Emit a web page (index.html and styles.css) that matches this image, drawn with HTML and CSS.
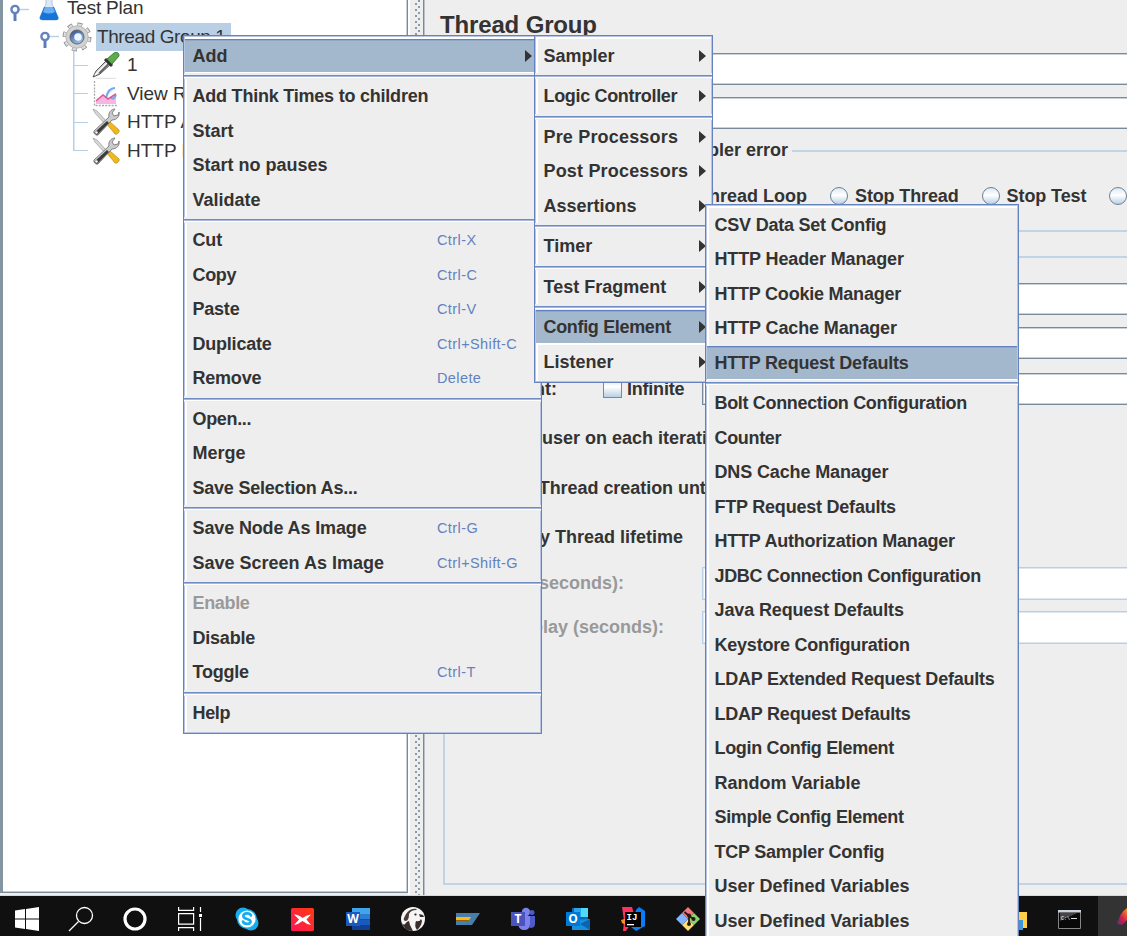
FILE: index.html
```html
<!DOCTYPE html>
<html lang="en">
<head>
<meta charset="utf-8">
<title>Thread Group</title>
<link rel="stylesheet" href="styles.css">
</head>
<body>
<svg class="defs" width="0" height="0" aria-hidden="true">
  <defs>
    <linearGradient id="orb" x1="0" y1="0" x2="0.6" y2="1"><stop offset="0" stop-color="#24457f"/><stop offset="1" stop-color="#9dc4ee"/></linearGradient>
    <linearGradient id="xred" x1="0" y1="1" x2="1" y2="0"><stop offset="0" stop-color="#ff1654"/><stop offset="1" stop-color="#ff3a10"/></linearGradient>
    <linearGradient id="feather" x1="0" y1="1" x2="1" y2="0"><stop offset="0" stop-color="#68217a"/><stop offset=".3" stop-color="#d0204b"/><stop offset=".7" stop-color="#f59a24"/></linearGradient>
    <symbol id="tools" viewBox="0 0 28 28">
      <path d="M1 1l4 2 10 11-2 2L3 5z" fill="#d8d8d8" stroke="#999" stroke-width=".7"/>
      <path d="M14 15l3-2 10 9c1 2-2 5-4 4z" fill="#f0b81c" stroke="#b98a0c" stroke-width=".7"/>
      <path d="M2 23l15-14c-1-4 2-8 6-8l-3 4 2 3 4-1 1-3c1 4-2 8-7 8L6 27c-2 1-5-2-4-4z" fill="#c9cbcc" stroke="#777" stroke-width=".9"/>
      <path d="M2 25l13-12 2 2L5 27z" fill="#3c3c3c"/><circle cx="4.500" cy="24.500" r="1.300" fill="#fff"/>
    </symbol>
    <symbol id="key" viewBox="0 0 20 18">
      <path d="M9 5.500h11" stroke="#b8cfe5" stroke-width="1.400"/><path d="M6 8v9" stroke="#5c7cb8" stroke-width="3"/><circle cx="6" cy="5.500" r="3.600" fill="#fff" stroke="#6382bf" stroke-width="2.400"/>
    </symbol>
  </defs>
</svg>

<div class="window">
  <div class="workspace">
    <aside class="tree">
      <div class="node n0"><svg class="key" width="20" height="18"><use href="#key"/></svg>
        <svg class="ico flask" width="24" height="26" viewBox="0 0 24 26"><path d="M9 0h6v9l6 13q1 3-3 3H6q-4 0-3-3L9 9z" fill="#dce9f8" stroke="#b6c5d6"/><path d="M7 12h10l4.500 11q0 2-3 2H6q-4 0-3-3z" fill="#1673d8"/><path d="M8 12h8l2 5q-6 3-12 0z" fill="#69b0f4"/></svg>
        <span>Test Plan</span></div>
      <div class="node n1"><svg class="key" width="20" height="18"><use href="#key"/></svg>
        <svg class="ico" width="30" height="30" viewBox="0 0 30 30"><circle cx="15" cy="15" r="12" fill="none" stroke="#8e8e8e" stroke-width="5" stroke-dasharray="4.700 4.725"/><circle cx="15" cy="15" r="11.800" fill="none" stroke="#dedede" stroke-width="3.600" stroke-dasharray="3.500 5.768" stroke-dashoffset="-.6"/><circle cx="15" cy="15" r="8.800" fill="#fff" stroke="#d2d2d2" stroke-width="5"/><circle cx="15" cy="15" r="11.200" fill="none" stroke="#aaa" stroke-width=".7"/><circle cx="15" cy="15" r="7" fill="url(#orb)" stroke="#60656d"/><circle cx="16" cy="15" r="3.800" fill="#edf6ff"/></svg>
        <span class="selected">Thread Group 1</span></div>
      <div class="children">
        <div class="node leaf"><svg class="ico" width="28" height="28" viewBox="0 0 28 28"><path d="M1 26l3-6L15 9l4 4L8 23z" fill="#c9cbcc" stroke="#555"/><path d="M7 22L17 12" stroke="#666" stroke-width="2.500"/><path d="M3 24L15 12" stroke="#fff" stroke-width="1.500"/><path d="M13 8l7 7" stroke="#333" stroke-width="3"/><path d="M15 8l7-6q5-2 5 3l-7 8z" fill="#5faa4b" stroke="#3c8035"/><path d="M4 27.300h20" stroke="#ddd"/></svg><span>1</span></div>
        <div class="node leaf"><svg class="ico" width="28" height="28" viewBox="0 0 28 28"><path d="M2.500 1v24.500H26" fill="none" stroke="#aaa" stroke-dasharray="2 1.200" stroke-width="1.300"/><path d="M4 24l0-4 7-6 5 4 8-5v11z" fill="#f7b5e2"/><path d="M14 18q2-10 9-10M19 17q2 4 5-2" stroke="#75a6ee" fill="#dceaff" stroke-width="2"/><path d="M4 21l7-6 5 4 8-5" fill="none" stroke="#df5b91" stroke-width="1.500"/></svg><span>View Results Tree</span></div>
        <div class="node leaf"><svg class="ico" width="28" height="28"><use href="#tools"/></svg><span>HTTP Authorization</span></div>
        <div class="node leaf"><svg class="ico" width="28" height="28"><use href="#tools"/></svg><span>HTTP Request</span></div>
      </div>
    </aside>
    <div class="splitter"></div>
    <main class="panel">
      <h1>Thread Group</h1>
      <div class="field f-name"></div>
      <div class="field f-comment"></div>
      <div class="legend"><span>Action to be taken after a Sampler error</span><i></i></div>
      <div class="radios"><span class="r0">Start Next Thread Loop</span><i class="radio"></i><span class="r1 t1">Stop Thread</span><i class="radio"></i><span class="r2">Stop Test</span><i class="radio"></i></div>
      <section class="props">
        <div class="field p1"></div>
        <div class="field p2"></div>
        <div class="loop"><b>Loop Count:</b><i class="check"></i><b class="inf t2">Infinite</b><div class="field"></div></div>
        <div class="opt o1">Same user on each iteration</div>
        <div class="opt o2">Delay Thread creation until needed</div>
        <div class="opt o3">Specify Thread lifetime</div>
        <div class="sched"><b class="s1">Duration (seconds):</b><div class="field pale"></div></div>
        <div class="sched second"><b class="s2">Startup delay (seconds):</b><div class="field pale"></div></div>
      </section>
    </main>
  </div>

  <footer class="taskbar">
    <svg width="24" height="24" viewBox="0 0 24 24" fill="#fff"><path d="M0 3.500L10 2v9.500H0zM11 2l13-2v11.500H11zM0 12.500h10V22L0 20.500zM11 12.500h13V24l-13-2z"/></svg>
    <svg width="26" height="26" viewBox="0 0 26 26" fill="none" stroke="#fff" stroke-width="1.300"><circle cx="16.500" cy="9.500" r="8"/><path d="M10.500 15.500L1 25"/></svg>
    <svg width="24" height="24" viewBox="0 0 24 24"><circle cx="12" cy="12" r="10" fill="none" stroke="#fff" stroke-width="3.200"/></svg>
    <svg width="24" height="24" viewBox="0 0 24 24" fill="none" stroke="#fff" stroke-width="1.200"><path d="M.6 0v3.400h15V0M.6 24v-3.400h15V24M.6 6.600h15v10.500H.6zM22.500 0v5M22.500 11v13"/><path d="M21 7h3v3h-3z" fill="#fff" stroke="none"/></svg>
    <svg width="24" height="24" viewBox="0 0 24 24"><circle cx="8" cy="8" r="7.500" fill="#14aef0"/><circle cx="16" cy="16" r="7.500" fill="#14aef0"/><circle cx="12" cy="12" r="10" fill="#14aef0"/><circle cx="12" cy="12" r="8.600" fill="#fff"/><path d="M16 8.500C15 5.500 8.500 5.700 8.300 9c-.2 3.600 7.300 2.200 7.300 5.500 0 3-6.600 3.300-7.600 0" fill="none" stroke="#14aef0" stroke-width="2.600" stroke-linecap="round"/></svg>
    <svg width="23" height="23" viewBox="0 0 23 23"><rect width="23" height="23" rx="1.500" fill="url(#xred)"/><path d="M3 6.500q5 0 8.500 3.500Q15 7 20 6.500l-4.500 5L20 17q-5-1-8.500-4Q8 16 3 17l5-5.500z" fill="#fff"/></svg>
    <svg width="24" height="24" viewBox="0 0 24 24"><path fill="#41a5ee" d="M6 1h18v6H6z"/><path fill="#2b7cd3" d="M6 7h18v5.500H6z"/><path fill="#185abd" d="M6 12.500h18V18H6z"/><path fill="#103f91" d="M6 18h18v5H6z"/><path fill="#185abd" d="M0 5h14v14H0z"/><text x="7" y="16" text-anchor="middle" class="glyph">W</text></svg>
    <svg width="24" height="24" viewBox="0 0 24 24"><circle cx="12" cy="12" r="12" fill="#f7f5f3"/><path d="M5 7q4-6 11-5l-1 1q-5 0-7 4 0 6-3 7-3 0-2-3z" fill="#4a3d38"/><path d="M0 14q2 5 4 3 2-3 4-3l1 4 3 6q-9 0-12-10zM15 14q4 1 5-2l1 2q-1 6-5 9-3-4-1-9zM18 7l4 1 1 2-4 0z" fill="#382e2a"/><circle cx="14.500" cy="7.500" r="1.100" fill="#222"/></svg>
    <svg width="24" height="24" viewBox="0 0 24 24"><path d="M0 6h24l-8 12h-5l3-8H0z" fill="#477eac"/><path d="M0 10h15l-2 3.500H0z" fill="#fdb813"/><path d="M0 14h13l-2 4H0z" fill="#477eac"/></svg>
    <svg width="24" height="24" viewBox="0 0 24 24"><circle cx="15" cy="5" r="4.200" fill="#7b83eb"/><circle cx="21" cy="5.500" r="2.500" fill="#5059c9"/><path d="M17 9h7v8q0 4-5 4z" fill="#5059c9"/><path d="M7 9h12v8q0 6-6 6-5 0-6-6z" fill="#7b83eb"/><path fill="#4b53bc" d="M0 5h14v14H0z"/><text x="7" y="16" text-anchor="middle" class="glyph">T</text></svg>
    <svg width="24" height="24" viewBox="0 0 24 24"><path fill="#0a65b6" d="M6 1h16v14H6z"/><path fill="#28a8ea" d="M8 1h7v9H8z"/><path fill="#50d9ff" d="M15 1h7v9h-7z"/><path fill="#1490df" d="M6 13l18-1v11H6z"/><path fill="#0b64ad" d="M24 12v11L14 17z"/><path fill="#0078d4" d="M0 5h14v14H0z"/><text x="7" y="16" text-anchor="middle" class="glyph">O</text></svg>
    <svg width="24" height="24" viewBox="0 0 24 24"><path fill="#ff315f" d="M1 0l10 0 3 10-9 14H2l1-10z"/><path fill="#ff8a20" d="M0 13l7-2-2 7-4-2z"/><path fill="#087cfa" d="M15 3l3-3 6 4v15l-9 5-5-4z"/><path d="M4 5h16v15H4z"/><text x="5.500" y="13" class="glyph ij">IJ</text><path fill="#fff" d="M6 17h7v1.300H6z"/></svg>
    <svg width="24" height="24" viewBox="0 0 24 24"><path d="M12 0l6 6-6 6-6-6z" fill="#f27779"/><path d="M18 6l6 6-6 6-6-6z" fill="#8bd36b"/><path d="M12 12l6 6-6 6-6-6z" fill="#ffe06f"/><path d="M6 6l6 6-6 6-6-6z" fill="#82b4ff"/><path d="M8.500 5l4.500 4v8M12.500 8.500l5 3.500" stroke="#2b1717" stroke-width="1.800" fill="none"/><g fill="#2b1717"><circle cx="13" cy="8.500" r="2"/><circle cx="17.500" cy="12" r="2"/><circle cx="13" cy="17" r="2"/></g></svg>
    <svg class="folder" width="24" height="18" viewBox="0 0 24 18"><path d="M0 0h24v16H0z" fill="#ffcf48"/><path d="M5 8h15v10H5z" fill="#3a96dd"/></svg>
    <svg class="cmd" width="23" height="19" viewBox="0 0 23 19"><path fill="#080808" stroke="#858585" d="M.5.500h22v18H.5z"/><path d="M0 0h23v2.500H0z" fill="#ccd2dc"/><path d="M2 3h17L2 11z" fill="#464646"/><text x="3" y="9.500" class="prompt">C:\</text><path d="M13 8.500h6" stroke="#ddd"/></svg>
    <div class="active"><svg width="24" height="26" viewBox="0 0 24 26"><path d="M2 19Q3 5 17 0q3 3-1 10L6 20z" fill="url(#feather)"/><path d="M1 15l5 4-4 0z" fill="#8b267c"/></svg></div>
  </footer>
</div>

<nav class="menu main-menu">
  <div class="item on">Add<i class="arrow"></i></div><hr>
  <div class="item t2">Add Think Times to children</div>
  <div class="item">Start</div>
  <div class="item">Start no pauses</div>
  <div class="item">Validate</div><hr>
  <div class="item t1">Cut<kbd>Ctrl-X</kbd></div>
  <div class="item t3">Copy<kbd>Ctrl-C</kbd></div>
  <div class="item t2">Paste<kbd>Ctrl-V</kbd></div>
  <div class="item t2">Duplicate<kbd>Ctrl+Shift-C</kbd></div>
  <div class="item t2">Remove<kbd>Delete</kbd></div><hr>
  <div class="item t3">Open...</div>
  <div class="item">Merge</div>
  <div class="item t2">Save Selection As...</div><hr>
  <div class="item t1">Save Node As Image<kbd>Ctrl-G</kbd></div>
  <div class="item">Save Screen As Image<kbd>Ctrl+Shift-G</kbd></div><hr>
  <div class="item off t3">Enable</div>
  <div class="item t2">Disable</div>
  <div class="item t2">Toggle<kbd>Ctrl-T</kbd></div><hr>
  <div class="item t3">Help</div>
</nav>

<nav class="menu add-menu">
  <div class="item">Sampler<i class="arrow"></i></div><hr>
  <div class="item t3">Logic Controller<i class="arrow"></i></div><hr>
  <div class="item wide">Pre Processors<i class="arrow"></i></div>
  <div class="item wide">Post Processors<i class="arrow"></i></div>
  <div class="item">Assertions<i class="arrow"></i></div><hr>
  <div class="item">Timer<i class="arrow"></i></div><hr>
  <div class="item">Test Fragment<i class="arrow"></i></div><hr>
  <div class="item on t3">Config Element<i class="arrow"></i></div>
  <div class="item">Listener<i class="arrow"></i></div>
</nav>

<nav class="menu config-menu">
  <div class="item t2">CSV Data Set Config</div>
  <div class="item t1">HTTP Header Manager</div>
  <div class="item t2">HTTP Cookie Manager</div>
  <div class="item t1">HTTP Cache Manager</div>
  <div class="item on t2">HTTP Request Defaults</div><hr>
  <div class="item t3">Bolt Connection Configuration</div>
  <div class="item t3">Counter</div>
  <div class="item t1">DNS Cache Manager</div>
  <div class="item t2">FTP Request Defaults</div>
  <div class="item t2">HTTP Authorization Manager</div>
  <div class="item t3">JDBC Connection Configuration</div>
  <div class="item t1">Java Request Defaults</div>
  <div class="item t2">Keystore Configuration</div>
  <div class="item t2">LDAP Extended Request Defaults</div>
  <div class="item t2">LDAP Request Defaults</div>
  <div class="item t3">Login Config Element</div>
  <div class="item">Random Variable</div>
  <div class="item t3">Simple Config Element</div>
  <div class="item t2">TCP Sampler Config</div>
  <div class="item">User Defined Variables</div>
  <div class="item">User Defined Variables</div>
</nav>
</body>
</html>
```

FILE: styles.css
```css
* { box-sizing: border-box; }
body { margin: 0; width: 1127px; height: 936px; overflow: hidden; position: relative; background: #eee; color: #333; font: bold 18px/20px "Liberation Sans", Arial, sans-serif; white-space: nowrap; }
.defs { position: absolute; }
.window { height: 936px; display: flex; flex-direction: column; }
.workspace { height: 896px; display: flex; overflow: hidden; border-bottom: 1px solid #d8d8d8; }

/* letter fitting */
.t1 { letter-spacing: -.13px; }
.t2 { letter-spacing: -.22px; }
.t3 { letter-spacing: -.33px; }
.wide { letter-spacing: .18px; }

/* tree */
.tree { width: 408px; height: 893px; flex: none; background: #fff; border: solid #7a8a99; border-width: 0 1px 1px 3px; border-left-color: #8594a3; box-shadow: inset -1px -1px #c4cdd5; font-weight: normal; font-size: 19px; letter-spacing: -.4px; overflow: hidden; }
.node { height: 28.5px; display: flex; align-items: center; }
.n0 { margin-top: -6px; padding-left: 6px; }
.n0 .flask { margin: 0 6px 0 8px; }
.n0 span { letter-spacing: -.2px; }
.n1 { padding-left: 36px; }
.n1 .ico { margin: 0 4px 0 3px; }
.n0 .key { margin-top: 10px; }
.n1 .key { margin-top: 6px; }
.selected { background: #b8cfe5; height: 28px; line-height: 27px; width: 135px; padding-left: 1px; }
.children { margin-left: 70px; padding-left: 1px; background: linear-gradient(#b8cfe5, #b8cfe5) 0 0 / 1.500px 100px no-repeat; }
.leaf::before { content: ""; width: 14px; height: 1px; background: #b8cfe5; margin-right: 4px; }
.leaf span { margin-left: 7px; letter-spacing: 0; }

.splitter { width: 17px; flex: none; border-right: 1px solid #b9c2ca; box-shadow: inset -1px 0 #7a8a99; background: radial-gradient(circle, #8b9baa .9px, transparent 1.300px) 3px 1px / 6px 6px repeat-y, radial-gradient(circle, #8b9baa .9px, transparent 1.300px) 6px 4px / 6px 6px repeat-y, #eee; border-left: 2px solid #fff; }

/* form */
.panel { flex: 1; min-width: 0; display: flex; flex-direction: column; padding-left: 15px; }
h1 { font-size: 24px; line-height: 28px; margin: 11px 0 0; height: 42px; letter-spacing: -.15px; }
.field { height: 32px; background: #fff; border: 1px solid #7a8a99; box-shadow: inset 0 0 0 1px #c8d2da; flex: none; }
.f-name, .f-comment { margin-left: 100px; margin-right: -4px; }
.f-comment { margin-top: 12px; }
.legend { height: 20px; margin-top: 11px; display: flex; align-items: center; }
.legend span { width: 348px; text-align: right; }
.legend i { flex: 1; height: 2px; margin: 2px 0 0 4px; background: #c1d4e6; }
.radios { display: flex; align-items: center; height: 71.5px; border-bottom: 2px solid #c1d4e6; padding-top: 3px; margin-left: 3px; }
.radios > * { flex: none; }
.r0 { width: 364px; text-align: right; }
.radio { width: 18px; height: 18px; border-radius: 50%; border: 1px solid #6f8192; background: linear-gradient(#dce8f3, #fff 45%, #b8cfe5); margin: 0 7px 0 23px; }
.r2 { letter-spacing: -.1px; }
.props { height: 629px; margin: 24px -4px 0 3px; border: 2px solid #c1d4e6; padding-top: 25px; flex: none; }
.p1, .p2 { margin-left: 200px; }
.p2 { margin-top: 12px; }
.loop { display: flex; align-items: center; height: 32px; margin-top: 14px; }
.loop b:first-child { width: 112px; text-align: right; }
.loop .field { flex: 1; }
.check { width: 19px; height: 19px; margin: 0 5px 0 46px; border: 1px solid #7a8a99; background: linear-gradient(#dce8f3, #fff 40%, #b8cfe5); }
.inf { width: 75px; }
.opt { height: 49.5px; line-height: 20px; }
.o1 { margin: 23.5px 0 0 44px; }
.o2 { margin-left: 41px; letter-spacing: -.05px; }
.o3 { width: 238px; text-align: right; height: 41px; }
.sched { display: flex; align-items: center; height: 33px; margin-top: -1.5px; color: #999; }
.sched.second { margin-top: 11px; }
.sched .field { flex: 1; height: 33px; }
.s1, .s2 { flex: none; width: 257px; padding-right: 78px; text-align: right; }
.s2 { padding-right: 38px; }
.pale { border-color: #b8cfe5; box-shadow: inset 0 0 0 1px #dce7f1; }

/* popup menus */
.menu { position: absolute; background: #eee; border: 1px solid #6382bf; box-shadow: inset 0 0 0 1px #b5c5e3, inset 2px 2px 0 1px #fff; padding: 2.500px 1px; }
.main-menu { left: 183px; top: 35px; width: 359px; height: 699px; }
.add-menu { left: 534px; top: 35px; width: 179px; height: 347.5px; }
.config-menu { left: 705px; top: 204px; width: 314px; height: 760px; }
.item { height: 34.5px; display: flex; align-items: center; padding-left: 7.500px; position: relative; }
.on { background: linear-gradient(#6382bf 0 1px, #8fa6c6 1px 2px, #a3b8cc 2px 33px, #fff 33px); }
.off { color: #999; }
.menu hr { height: 6px; margin: 0 -1px; border: 0; background: linear-gradient(#eee 0 2px, #6f8cc5 2px 3px, #a5b8dc 3px 4px, #fff 4px 5px, #eee 5px); }
kbd { position: absolute; left: 252px; font: 14.5px "Liberation Sans", Arial, sans-serif; letter-spacing: .4px; color: #6382bf; }
.arrow { position: absolute; right: 5px; border: solid transparent; border-width: 6px 0 6px 7px; border-left-color: #333; }
.main-menu .arrow { right: 8px; }

/* taskbar */
.taskbar { height: 40px; background: #101010; display: grid; grid-template-columns: 54px 54px 54px 56px 57px repeat(8, 55px) 312px 71px 29px; grid-template-rows: 40px; align-items: center; justify-items: center; overflow: hidden; }
.taskbar > svg { margin-top: 6px; }
.taskbar .folder { justify-self: end; margin-top: 10px; }
.taskbar .cmd { justify-self: end; margin: 6px 17px 0 0; }
.active { background: #333; height: 40px; width: 29px; padding: 9px 0 0 18px; overflow: hidden; }
.glyph { font: bold 12px "Open Sans", sans-serif; fill: #fff; }
.ij { font: bold 9px "Liberation Mono", monospace; }
.prompt { font: 5px "Liberation Mono", monospace; fill: #fff; }
```
